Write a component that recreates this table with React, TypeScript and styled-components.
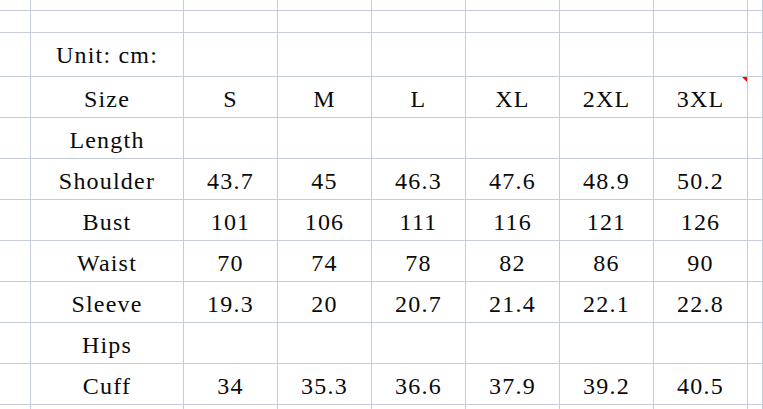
import React from 'react';
import styled, { createGlobalStyle } from 'styled-components';

const GlobalStyle = createGlobalStyle`
  html, body {
    margin: 0;
    padding: 0;
    background: #ffffff;
    overflow: hidden;
  }
`;

const COLS = [31, 153, 94, 94, 94, 94, 94, 94, 15];
const ROW_HEIGHTS = [5, 28, 44, 41, 41, 41, 41, 41, 41, 41, 41, 5];

const Sheet = styled.div`
  display: grid;
  grid-template-columns: ${COLS.map((c) => `${c}px`).join(' ')};
  grid-template-rows: ${ROW_HEIGHTS.map((r) => `${r}px`).join(' ')};
  width: 763px;
  height: 409px;
  overflow: hidden;
  font-family: 'Liberation Serif', 'Noto Sans CJK SC', serif;
  font-size: 24px;
  letter-spacing: 1.2px;
  color: #0a0a0a;
`;

const Cell = styled.div`
  position: relative;
  box-sizing: border-box;
  border-right: 1px solid #c6ccdb;
  border-bottom: 1px solid #c6ccdb;
  display: flex;
  justify-content: center;
  align-items: flex-start;
  padding-top: 10px;
  line-height: 24px;
  white-space: nowrap;
`;

const NoteMark = styled.span`
  position: absolute;
  top: 0;
  right: 0;
  width: 0;
  height: 0;
  border-top: 5px solid #ff0000;
  border-left: 5px solid transparent;
`;

const rows: string[][] = [
  [],
  [],
  ['Unit: cm:'],
  ['Size', 'S', 'M', 'L', 'XL', '2XL', '3XL'],
  ['Length'],
  ['Shoulder', '43.7', '45', '46.3', '47.6', '48.9', '50.2'],
  ['Bust', '101', '106', '111', '116', '121', '126'],
  ['Waist', '70', '74', '78', '82', '86', '90'],
  ['Sleeve', '19.3', '20', '20.7', '21.4', '22.1', '22.8'],
  ['Hips'],
  ['Cuff', '34', '35.3', '36.6', '37.9', '39.2', '40.5'],
  [],
];

export default function App() {
  return (
    <>
      <GlobalStyle />
      <Sheet>
        {rows.map((row, r) =>
          COLS.map((_, c) => {
            const text = c >= 1 && c <= 7 ? row[c - 1] : undefined;
            return (
              <Cell key={`${r}-${c}`}>
                {text}
                {r === 3 && c === 7 && <NoteMark />}
              </Cell>
            );
          })
        )}
      </Sheet>
    </>
  );
}
